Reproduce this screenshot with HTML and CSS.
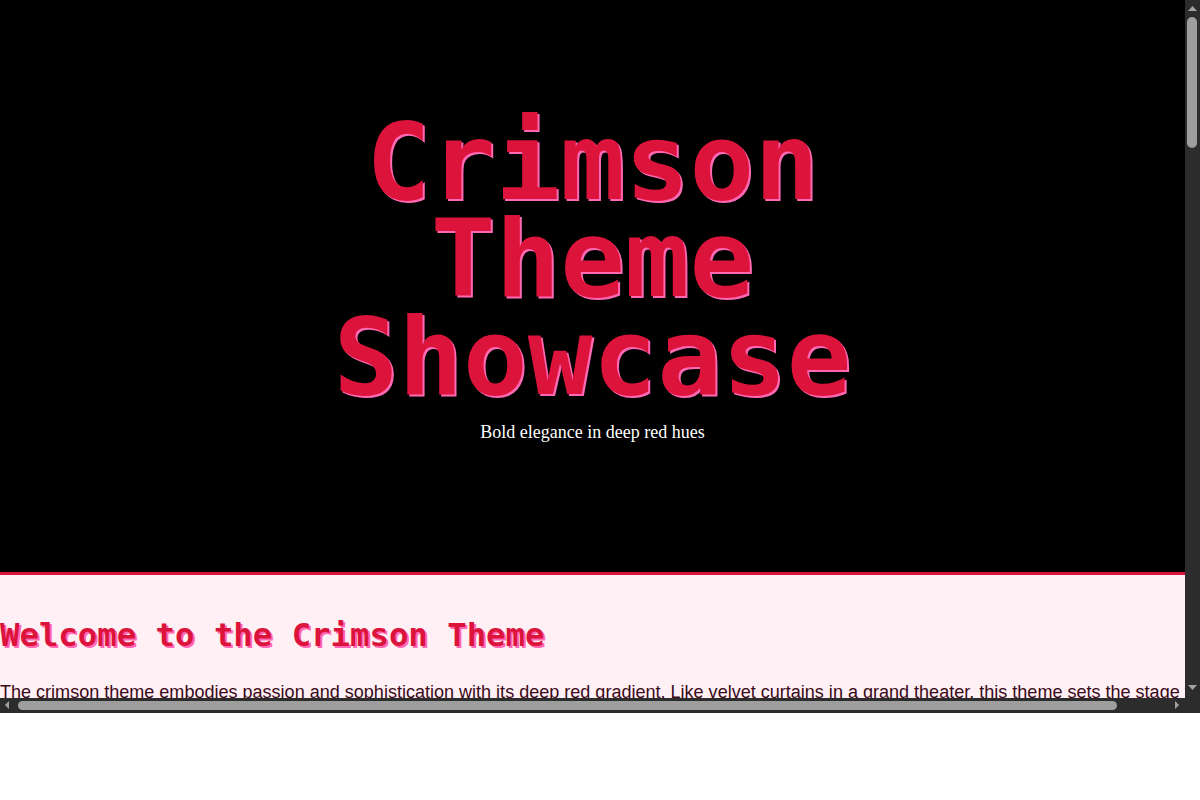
FILE: index.html
```html
<!DOCTYPE html>
<html lang="en">
<head>
<meta charset="utf-8">
<title>Crimson Theme Showcase</title>
<link rel="stylesheet" href="styles.css">
</head>
<body>
<div class="window">
  <div class="viewport">
    <header class="hero">
      <h1 class="hero-title">Crimson Theme Showcase</h1>
      <p class="hero-sub">Bold elegance in deep red hues</p>
    </header>
    <main class="content">
      <h2 class="section-title">Welcome to the Crimson Theme</h2>
      <p class="lead">The crimson theme embodies passion and sophistication with its deep red gradient. Like velvet curtains in a grand theater, this theme sets the stage for bold statements and memorable experiences. Every element is crafted to draw the eye and hold attention.</p>
      <h2 class="section-title">Design Principles</h2>
      <p class="lead">Strong contrast between deep black and vivid crimson gives every headline presence, while soft blush backgrounds keep long passages comfortable to read.</p>
    </main>
  </div>
  <div class="vscroll">
    <span class="sb-btn"><svg width="15" height="15" viewBox="0 0 15 15"><polygon points="3,11 12,11 7.5,6" fill="#a3a3a3"/></svg></span>
    <div class="vtrack"><div class="vthumb"></div></div>
    <span class="sb-btn"><svg width="15" height="15" viewBox="0 0 15 15"><polygon points="3,2 12,2 7.5,7" fill="#a3a3a3"/></svg></span>
  </div>
  <div class="hscroll">
    <span class="sb-btn"><svg width="15" height="15" viewBox="0 0 15 15"><polygon points="9,3 9,11 5,7" fill="#a3a3a3"/></svg></span>
    <div class="htrack"><div class="hthumb"></div></div>
    <span class="sb-btn"><svg width="15" height="15" viewBox="0 0 15 15"><polygon points="5,3 5,11 9,7" fill="#a3a3a3"/></svg></span>
  </div>
  <div class="corner"></div>
</div>
</body>
</html>
```

FILE: styles.css
```css
html, body {
  margin: 0;
  padding: 0;
  background: #ffffff;
}

.window {
  display: grid;
  grid-template-columns: 1185px 15px;
  grid-template-rows: 698px 15px;
  width: 1200px;
}

.viewport {
  overflow: hidden;
  background: #fff0f5;
}

.vscroll,
.hscroll,
.corner {
  background: #2c2c2c;
}

.vscroll {
  display: flex;
  flex-direction: column;
}

.hscroll {
  display: flex;
}

.sb-btn {
  flex: none;
  display: block;
  width: 15px;
  height: 15px;
}

.sb-btn svg {
  display: block;
}

.vtrack {
  flex: 1;
  padding: 2px 3px 0 2px;
}

.vthumb {
  height: 131px;
  border-radius: 5px;
  background: #9e9e9e;
}

.htrack {
  flex: 1;
  padding: 3px 0 3px 3px;
}

.hthumb {
  width: 1099px;
  height: 9px;
  border-radius: 5px;
  background: #9e9e9e;
}

.hero {
  box-sizing: border-box;
  width: 1185px;
  height: 575px;
  padding-top: 113px;
  background: #000000;
  border-bottom: 3px solid #dc143c;
  text-align: center;
}

.hero-title {
  margin: 0 auto;
  width: 560px;
  font-family: "DejaVu Sans Mono", monospace;
  font-weight: bold;
  font-size: 107.5px;
  line-height: 0.905;
  color: #dc143c;
  text-shadow: 2px 2px 0 #ff69b4;
}

.hero-sub {
  margin: 17px 0 0;
  font-family: "Liberation Serif", "Times New Roman", serif;
  font-size: 18px;
  color: #ffffff;
}

.content {
  width: 1240px;
  padding-top: 1px;
  background: #fff0f5;
}

.section-title {
  margin: 40px 0 0;
  font-family: "DejaVu Sans Mono", monospace;
  font-weight: bold;
  font-size: 32.3px;
  color: #dc143c;
  text-shadow: 2px 2px 0 #ff69b4;
}

.lead {
  margin: 24px 0 0;
  font-family: "Liberation Sans", Arial, sans-serif;
  font-size: 18.05px;
  line-height: 1.6;
  color: #3a0a18;
}
```
